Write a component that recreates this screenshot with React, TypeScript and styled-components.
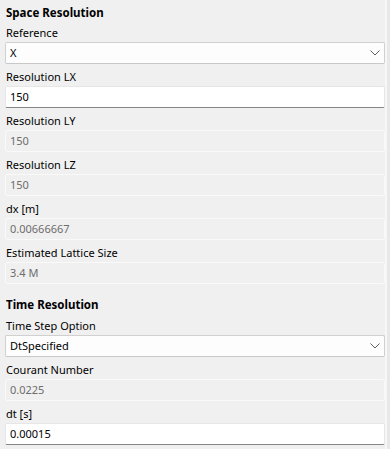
import React from 'react';
import styled, { createGlobalStyle } from 'styled-components';

const GlobalStyle = createGlobalStyle`
    html, body {
        margin: 0;
        padding: 0;
        background: #f0f0f0;
    }
    * {
        box-sizing: border-box;
    }
`;

const Window = styled.div`
    display: flex;
    width: 390px;
    height: 449px;
    overflow: hidden;
    font-family: 'Noto Sans', 'Open Sans', sans-serif;
    font-size: 11px;
    color: #000;
`;

const Panel = styled.div`
    display: flex;
    flex: 1;
    flex-direction: column;
    padding: 0 0 0 5px;
`;

const ScrollTrack = styled.div`
    width: 5px;
    border-left: 2px solid #f7f7f7;
    background: #e8e8e8;
`;

const SectionTitle = styled.div<{ first?: boolean }>`
    height: ${({ first }) => (first ? 21 : 29)}px;
    padding: ${({ first }) => (first ? 4 : 11)}px 0 0 1px;
    font-weight: 700;
    font-size: 11.5px;
    line-height: 18px;
`;

const Field = styled.div`
    display: flex;
    flex-direction: column;
    margin-bottom: 1px;
`;

const Label = styled.div`
    height: 21px;
    padding: 3px 0 0 1px;
    line-height: 18px;
`;

const Box = styled.div<{ kind: 'input' | 'select' | 'disabled' }>`
    display: flex;
    align-items: center;
    height: 22px;
    padding: 0 4px;
    line-height: 18px;
    background: ${({ kind }) =>
        kind === 'input' ? '#ffffff' : kind === 'select' ? '#fdfdfd' : '#f0f0f0'};
    border: 1px solid
        ${({ kind }) => (kind === 'input' ? '#e6e6e6' : kind === 'select' ? '#d0d0d0' : '#f9f9f9')};
    border-bottom-color: ${({ kind }) =>
        kind === 'input' ? '#868686' : kind === 'select' ? '#c8c8c8' : '#f9f9f9'};
    color: ${({ kind }) => (kind === 'disabled' ? '#6d6d6d' : '#000')};
    border-radius: 2px;
`;

const Value = styled.span`
    flex: 1;
`;

const Chevron = () => (
    <svg width="10" height="6" viewBox="0 0 10 6">
        <path d="M0.5 0.5 L5 5 L9.5 0.5" fill="none" stroke="#5f5f5f" strokeWidth="1" />
    </svg>
);

type FieldDef = { label: string; value: string; kind: 'input' | 'select' | 'disabled' };

const space: FieldDef[] = [
    { label: 'Reference', value: 'X', kind: 'select' },
    { label: 'Resolution LX', value: '150', kind: 'input' },
    { label: 'Resolution LY', value: '150', kind: 'disabled' },
    { label: 'Resolution LZ', value: '150', kind: 'disabled' },
    { label: 'dx [m]', value: '0.00666667', kind: 'disabled' },
    { label: 'Estimated Lattice Size', value: '3.4 M', kind: 'disabled' },
];

const time: FieldDef[] = [
    { label: 'Time Step Option', value: 'DtSpecified', kind: 'select' },
    { label: 'Courant Number', value: '0.0225', kind: 'disabled' },
    { label: 'dt [s]', value: '0.00015', kind: 'input' },
];

const renderField = (f: FieldDef) => (
    <Field key={f.label}>
        <Label>{f.label}</Label>
        <Box kind={f.kind}>
            <Value>{f.value}</Value>
            {f.kind === 'select' && <Chevron />}
        </Box>
    </Field>
);

export default function App() {
    return (
        <>
            <GlobalStyle />
            <Window>
                <Panel>
                    <SectionTitle first>Space Resolution</SectionTitle>
                    {space.map(renderField)}
                    <SectionTitle>Time Resolution</SectionTitle>
                    {time.map(renderField)}
                </Panel>
                <ScrollTrack />
            </Window>
        </>
    );
}
